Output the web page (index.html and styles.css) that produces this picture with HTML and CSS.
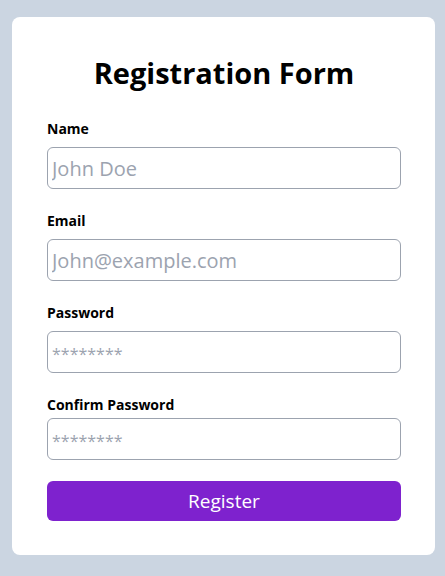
FILE: index.html
```html
<!DOCTYPE html>
<html lang="en">
<head>
<meta charset="utf-8">
<title>Registration Form</title>
<link rel="stylesheet" href="styles.css">
</head>
<body>
  <main class="card">
    <h1 class="title">Registration Form</h1>
    <form class="form">
      <div class="field">
        <label class="label" for="name">Name</label>
        <input class="input" id="name" type="text" placeholder="John Doe">
      </div>
      <div class="field">
        <label class="label" for="email">Email</label>
        <input class="input" id="email" type="email" placeholder="John@example.com">
      </div>
      <div class="field">
        <label class="label" for="password">Password</label>
        <input class="input input-secret" id="password" type="text" placeholder="********">
      </div>
      <div class="field field-last">
        <label class="label label-tight" for="confirm">Confirm Password</label>
        <input class="input input-secret" id="confirm" type="text" placeholder="********">
      </div>
      <button class="button" type="button">Register</button>
    </form>
  </main>
</body>
</html>
```
FILE: styles.css
```css
* { box-sizing: border-box; }
html, body { margin: 0; }
body {
  background: #cbd5e1;
  font-family: "Open Sans", "Noto Sans", sans-serif;
  padding: 17px 10px 21px 12px;
  min-height: 576px;
}
.card {
  width: 423px;
  height: 538px;
  background: #ffffff;
  border-radius: 8px;
  padding: 38px 34px 34px 35px;
}
.title {
  margin: 0 0 28px;
  text-align: center;
  font-size: 29px;
  line-height: 36px;
  font-weight: 700;
  color: #000;
}
.form { display: flex; flex-direction: column; }
.field { display: flex; flex-direction: column; margin-bottom: 22px; }
.field-last { margin-bottom: 21px; }
.label {
  font-size: 14px;
  line-height: 20px;
  font-weight: 700;
  color: #000;
  margin-bottom: 8px;
}
.label-tight { margin-bottom: 3px; }
.input {
  width: 354px;
  height: 42px;
  border: 1px solid #9ca3af;
  border-radius: 6px;
  padding: 0 4px;
  font-family: inherit;
  font-size: 20px;
  color: #111;
  background: #fff;
  outline: none;
}
.input::placeholder { color: #9ca3af; }
.input-secret::placeholder { font-size: 16px; }
.button {
  width: 354px;
  height: 40px;
  border: none;
  border-radius: 6px;
  background: #7e22ce;
  color: #fff;
  font-family: inherit;
  font-size: 19px;
  cursor: pointer;
}
```
